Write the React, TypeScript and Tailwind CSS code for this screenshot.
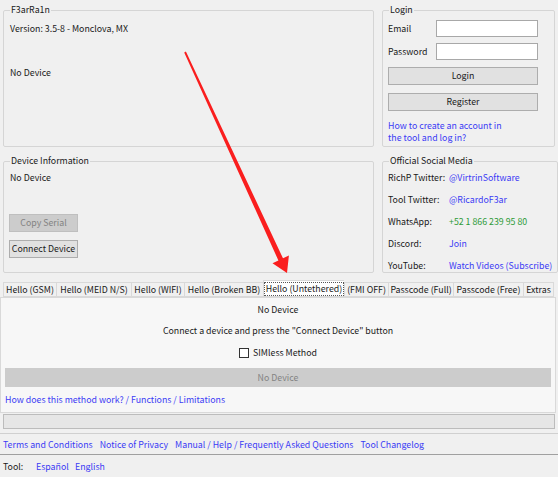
import React from "react";

const Group = ({
  title,
  className,
  children,
}: {
  title: string;
  className?: string;
  children?: React.ReactNode;
}) => (
  <fieldset className={`border border-[#d5d5d5] rounded-[2px] px-[5px] ${className ?? ""}`}>
    <legend className="ml-[1px] px-[1px] leading-[14px] text-[#1a1a1a]">{title}</legend>
    {children}
  </fieldset>
);

const WinButton = ({ text, disabled, className }: { text: string; disabled?: boolean; className?: string }) => (
  <div
    className={`flex items-center justify-center whitespace-nowrap h-[18px] border ${
      disabled ? "border-[#bfbfbf] bg-[#cccccc] text-[#838383]" : "border-[#adadad] bg-[#e1e1e1] text-[#1a1a1a]"
    } ${className ?? ""}`}
  >
    {text}
  </div>
);

const tabs = [
  { label: "Hello (GSM)", w: "w-[53px]" },
  { label: "Hello (MEID N/S)", w: "w-[75px]" },
  { label: "Hello (WIFI)", w: "w-[53px]" },
  { label: "Hello (Broken BB)", w: "w-[79px]" },
  { label: "Hello (Untethered)", w: "w-[81px]", active: true },
  { label: "(FMI OFF)", w: "w-[44px]" },
  { label: "Passcode (Full)", w: "w-[65px]" },
  { label: "Passcode (Free)", w: "w-[70px]" },
  { label: "Extras", w: "w-[31px]" },
];

const social = [
  { label: "RichP Twitter:", value: "@VirtrinSoftware", color: "text-[#3b3bf5]" },
  { label: "Tool Twitter:", value: "@RicardoF3ar", color: "text-[#3b3bf5]" },
  { label: "WhatsApp:", value: "+52 1 866 239 95 80", color: "text-[#2e9a37]" },
  { label: "Discord:", value: "Join", color: "text-[#3b3bf5]" },
  { label: "YouTube:", value: "Watch Videos (Subscribe)", color: "text-[#3b3bf5]" },
];

const footerLinks = [
  "Terms and Conditions",
  "Notice of Privacy",
  "Manual / Help / Frequently Asked Questions",
  "Tool Changelog",
];

export default function App() {
  return (
    <div className="relative w-[558px] h-[477px] overflow-hidden bg-[#f0f0f0] text-[8.8px] leading-[12px] text-[#1a1a1a] font-['Noto_Sans_CJK_SC',sans-serif]">
      <div className="flex gap-[8px] pl-[3px] pt-[3px]">
        <div className="flex flex-col gap-[7px] w-[371px]">
          <Group title="F3arRa1n" className="h-[144px]">
            <div className="pl-[1px] pt-[6px]">Version: 3.5-8 - Monclova, MX</div>
            <div className="pl-[1px] pt-[32px]">No Device</div>
          </Group>
          <Group title="Device Information" className="h-[119px]">
            <div className="pl-[1px] pt-[4px]">No Device</div>
            <WinButton text="Copy Serial" disabled className="w-[69px] mt-[30px]" />
            <WinButton text="Connect Device" className="w-[69px] mt-[8px] border-[#8f8f8f]" />
          </Group>
        </div>
        <div className="flex flex-col gap-[7px] w-[173px]">
          <Group title="Login" className="h-[144px]">
            <div className="flex items-center justify-between pt-[3px] pr-[11px]">
              <span>Email</span>
              <div className="w-[102px] h-[17px] bg-white border border-[#a8a8a8]" />
            </div>
            <div className="flex items-center justify-between pt-[6px] pr-[11px]">
              <span>Password</span>
              <div className="w-[102px] h-[17px] bg-white border border-[#a8a8a8]" />
            </div>
            <WinButton text="Login" className="w-[150px] mt-[7px]" />
            <WinButton text="Register" className="w-[150px] mt-[8px]" />
            <div className="pt-[9px] text-[#3b3bf5] leading-[12px]">
              How to create an account in
              <br />
              the tool and log in?
            </div>
          </Group>
          <Group title="Official Social Media" className="h-[119px]">
            <div className="flex flex-col gap-[10px] pt-[4px]">
              {social.map((s) => (
                <div key={s.label} className="flex whitespace-nowrap">
                  <span className="w-[61px] shrink-0">{s.label}</span>
                  <span className={s.color}>{s.value}</span>
                </div>
              ))}
            </div>
          </Group>
        </div>
      </div>

      <div className="mt-[7px] flex items-end pl-[3px] h-[17px]">
        {tabs.map((t) => (
          <div
            key={t.label}
            className={`${t.w} shrink-0 flex items-center justify-center whitespace-nowrap border border-r-0 border-[#d9d9d9] ${
              t.active ? "h-[17px] bg-white border-r" : "h-[15px] bg-[#f0f0f0] last:border-r"
            }`}
          >
            {t.active ? (
              <span className="border border-dotted border-[#555] px-[1px] leading-[12px]">{t.label}</span>
            ) : (
              t.label
            )}
          </div>
        ))}
      </div>
      <div className="w-[556px] h-[116px] border border-[#d9d9d9] bg-[#f7f7f7] flex flex-col">
        <div className="text-center pt-[6px]">No Device</div>
        <div className="text-center pt-[9px]">Connect a device and press the "Connect Device" button</div>
        <div className="flex items-center justify-center gap-[4px] pt-[10px]">
          <div className="w-[10px] h-[10px] border border-[#333] bg-white" />
          <span>SIMless Method</span>
        </div>
        <WinButton text="No Device" disabled className="mx-[4px] mt-[9px] h-[19px] border-[#cccccc]" />
        <div className="pl-[4px] pt-[7px] text-[#3b3bf5]">How does this method work? / Functions / Limitations</div>
      </div>

      <div className="mx-[3px] mt-[1px] h-[15px] border border-[#bcbcbc] bg-[#e6e6e6]" />
      <div className="mt-[4px] border-t border-[#d0d0d0]" />
      <div className="flex gap-[7px] pl-[3px] pt-[5px] h-[21px] text-[#3b3bf5] border-b border-[#a0a0a0]">
        {footerLinks.map((l) => (
          <span key={l} className="whitespace-nowrap">{l}</span>
        ))}
      </div>
      <div className="flex pl-[3px] pt-[6px]">
        <span className="w-[33px]">Tool:</span>
        <span className="text-[#3b3bf5] w-[39px]">Español</span>
        <span className="text-[#3b3bf5]">English</span>
      </div>

      <svg className="absolute left-0 top-0 pointer-events-none" width="558" height="477" viewBox="0 0 558 477">
        <polygon
          points="184.2,52.4 185.9,51.6 283,258.3 288.9,255.6 287,273 272.5,263.2 278.4,260.5"
          fill="#fa1e1e"
        />
      </svg>
    </div>
  );
}
